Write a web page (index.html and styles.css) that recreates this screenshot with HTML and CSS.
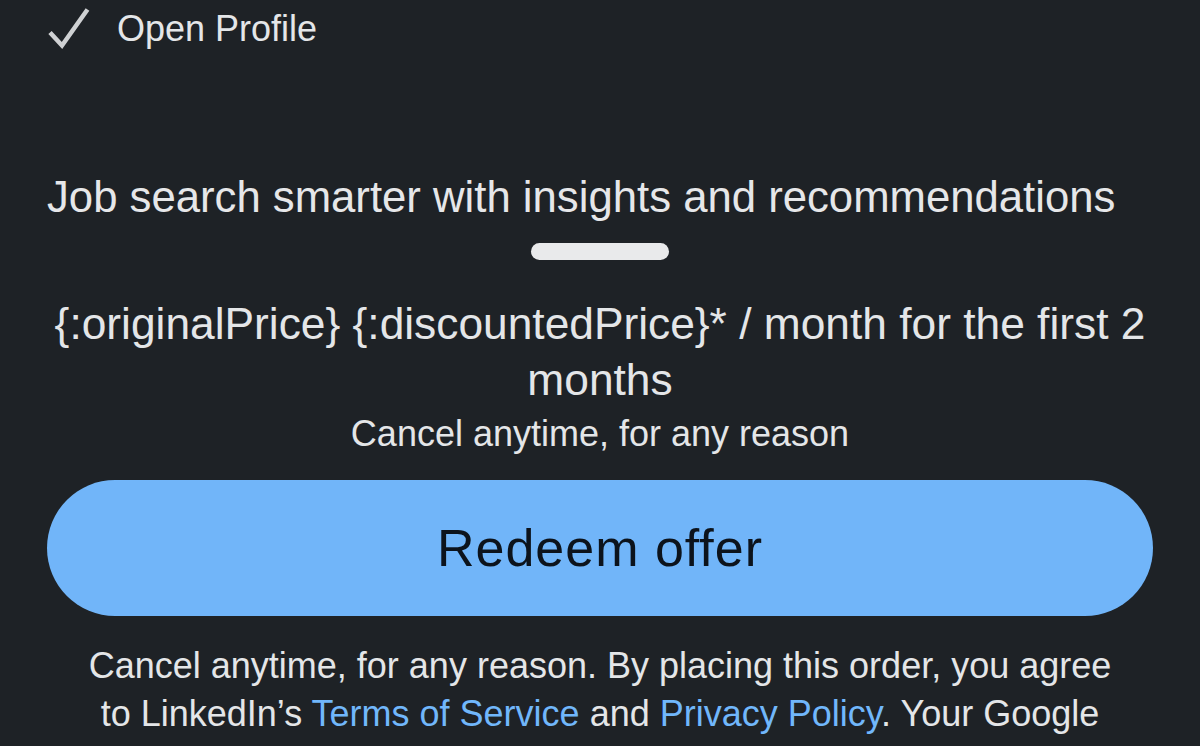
FILE: index.html
```html
<!DOCTYPE html>
<html lang="en">
<head>
  <meta charset="UTF-8" />
  <meta name="viewport" content="width=device-width, initial-scale=1" />
  <title>Premium offer</title>
  <link rel="stylesheet" href="styles.css">
</head>
<body>

  <main class="offer">
    <ul class="features">
      <li class="feature">
        <svg class="check" viewBox="0 0 44 40" width="44" height="40" aria-hidden="true">
          <path d="M4 23.5 L16 36.5 L41.5 0.5" />
        </svg>
        <span>Open Profile</span>
      </li>
    </ul>

    <h2 class="headline">Job search smarter with insights and recommendations</h2>
    <div class="divider"></div>

    <p class="price">{:originalPrice} {:discountedPrice}* / month for the first 2 months</p>
    <p class="note">Cancel anytime, for any reason</p>

    <button class="cta" type="button">Redeem offer</button>

    <p class="legal">Cancel anytime, for any reason. By placing this order, you agree to LinkedIn’s <a href="#">Terms of Service</a> and <a href="#">Privacy Policy</a>. Your Google</p>
  </main>

</body>
</html>
```

FILE: styles.css
```css
body {
  margin: 0;
  background: #1e2226;
  color: #e4e6e8;
  font-family: "Liberation Sans", Arial, sans-serif;
  overflow: hidden;
}
.offer {
  padding: 9px 47px 0;
}
.features {
  list-style: none;
  margin: 0;
  padding: 0;
}
.feature {
  display: flex;
  align-items: flex-start;
  gap: 27px;
  height: 40px;
  font-size: 36px;
  line-height: 40px;
}
.check {
  display: block;
  flex: none;
  margin-left: -1px;
  overflow: visible;
}
.check path {
  fill: none;
  stroke: #cfd1d3;
  stroke-width: 4.5;
  stroke-linejoin: miter;
}
.headline {
  margin: 122px 0 0;
  font-size: 43.7px;
  line-height: 52px;
  font-weight: 400;
  color: #e6e7e9;
}
.divider {
  width: 138px;
  height: 17px;
  margin: 20px auto 0;
  border-radius: 9px;
  background: #e9eaeb;
}
.price {
  margin: 36px 0 0;
  font-size: 44.3px;
  line-height: 56px;
  text-align: center;
}
.note {
  margin: 6px 0 0;
  font-size: 36px;
  line-height: 40px;
  text-align: center;
}
.cta {
  display: flex;
  align-items: center;
  justify-content: center;
  width: 100%;
  height: 136px;
  margin-top: 25.5px;
  border: none;
  border-radius: 68px;
  background: #71b5f9;
  color: #0c131c;
  font-family: inherit;
  font-size: 52px;
  line-height: 60px;
  letter-spacing: 1px;
  cursor: pointer;
}
.legal {
  margin: 26.5px 0 0;
  padding: 0 30px;
  font-size: 36px;
  line-height: 48px;
  text-align: center;
}
.legal a {
  color: #71b7fb;
  text-decoration: none;
}
```
